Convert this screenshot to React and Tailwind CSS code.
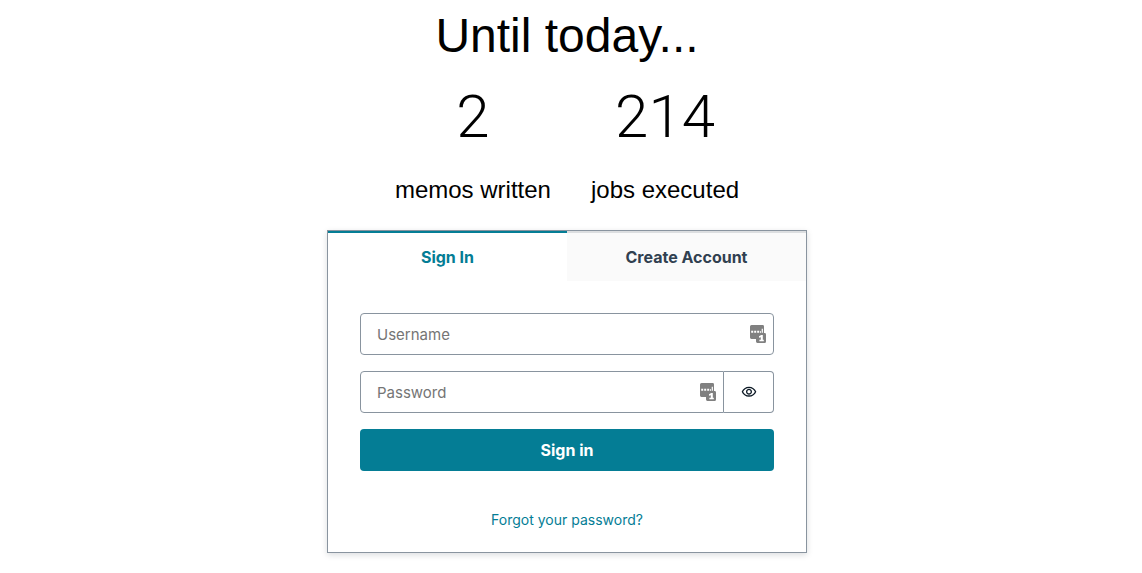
import { useState } from "react";

const stats = [
  { value: "2", label: "memos written" },
  { value: "214", label: "jobs executed" },
];

function Stat({ value, label }) {
  return (
    <div className="flex flex-col items-center">
      <span className="font-[Roboto,sans-serif] text-[60px] leading-[74px] font-light">
        {value}
      </span>
      <span className="mt-[22px] text-2xl leading-7">{label}</span>
    </div>
  );
}

function ManagerIcon({ className }) {
  return (
    <svg viewBox="0 0 16 18" aria-hidden="true" className={className}>
      <path
        fill="#808080"
        d="M1.5 0h11.2Q14 0 14 1.4V8h.7Q16 8 16 9.4v7.1Q16 18 14.6 18H7.4Q6 18 6 16.6V14H1.4Q0 14 0 12.600V1.500Q0 0 1.500 0Z"
      />
      <path
        fill="#fff"
        d="M1.200 5.800h2v2h-2zM4.200 5.800h2v2h-2zM7.200 5.800h2v2h-2zM10 6.300h1v1.500h-1zM11.700 3.800h1.200v4h-1.200zM9 11.200L11.200 10H12.800v4.800H13.800V16.200H9.400V14.800H10.800V12.200L9 12.800z"
      />
    </svg>
  );
}

function EyeIcon() {
  return (
    <svg viewBox="0 0 24 24" aria-hidden="true" className="size-4">
      <path
        fill="currentColor"
        d="M12 6C15.790 6 19.170 8.130 20.820 11.500C19.170 14.870 15.790 17 12 17C8.210 17 4.830 14.870 3.180 11.500C4.830 8.130 8.210 6 12 6ZM12 4C7 4 2.730 7.110 1 11.500C2.730 15.890 7 19 12 19C17 19 21.270 15.890 23 11.500C21.270 7.110 17 4 12 4ZM12 9C13.380 9 14.500 10.120 14.500 11.500C14.500 12.880 13.380 14 12 14C10.620 14 9.500 12.880 9.500 11.500C9.500 10.120 10.620 9 12 9ZM12 7C9.520 7 7.500 9.020 7.500 11.500C7.500 13.980 9.520 16 12 16C14.480 16 16.500 13.980 16.500 11.500C16.500 9.020 14.480 7 12 7Z"
      />
    </svg>
  );
}

export default function App() {
  const [tab, setTab] = useState("signin");
  const [visible, setVisible] = useState(false);

  const tabBase = "h-[50px] flex-1 border-t-2 font-bold";
  const active = "border-[#047d95] text-[#047d95]";
  const inactive = "border-[#dcdee0] bg-[#fafafa] text-[#304050]";

  return (
    <main className="flex flex-col items-center bg-white pr-2 pb-5 font-['Liberation_Sans',Arial,sans-serif] text-black">
      <h1 className="pt-2 text-5xl leading-14">Until today...</h1>
      <section className="mt-4 flex gap-10">
        {stats.map((s) => (
          <Stat key={s.label} {...s} />
        ))}
      </section>

      <section className="mt-[26px] w-full max-w-[480px] border border-[#89949f] bg-white font-[Inter,sans-serif] text-base leading-6 shadow-[0_2px_6px_rgba(13,26,38,0.15)]">
        <div role="tablist" className="flex">
          <button
            type="button"
            role="tab"
            aria-selected={tab === "signin"}
            onClick={() => setTab("signin")}
            className={`${tabBase} ${tab === "signin" ? active : inactive}`}
          >
            Sign In
          </button>
          <button
            type="button"
            role="tab"
            aria-selected={tab === "create"}
            onClick={() => setTab("create")}
            className={`${tabBase} ${tab === "create" ? active : inactive}`}
          >
            Create Account
          </button>
        </div>

        <form
          onSubmit={(e) => e.preventDefault()}
          className="flex flex-col gap-4 p-8"
        >
          <div className="relative">
            <input
              type="text"
              aria-label="Username"
              placeholder="Username"
              className="block h-[42px] w-full rounded border border-[#89949f] pr-10 pl-4 text-[15px] placeholder:text-[#757575]"
            />
            <ManagerIcon className="absolute top-3 right-2 h-[18px] w-4" />
          </div>
          <div className="flex">
            <div className="relative flex-1">
              <input
                type={visible ? "text" : "password"}
                aria-label="Password"
                placeholder="Password"
                className="block h-[42px] w-full rounded-l border border-[#89949f] pr-10 pl-4 text-[15px] placeholder:text-[#757575]"
              />
              <ManagerIcon className="absolute top-3 right-2 h-[18px] w-4" />
            </div>
            <button
              type="button"
              aria-label="Show password"
              onClick={() => setVisible(!visible)}
              className="flex h-[42px] w-[50px] items-center justify-center rounded-r border border-l-0 border-[#89949f] text-[#0d1a26]"
            >
              <EyeIcon />
            </button>
          </div>
          <button
            type="submit"
            className="h-[42px] rounded bg-[#047d95] font-bold text-white"
          >
            Sign in
          </button>
        </form>

        <div className="flex justify-center pt-[7px] pb-[22px] text-sm">
          <a href="#forgot" className="text-[#047d95]">
            Forgot your password?
          </a>
        </div>
      </section>
    </main>
  );
}
